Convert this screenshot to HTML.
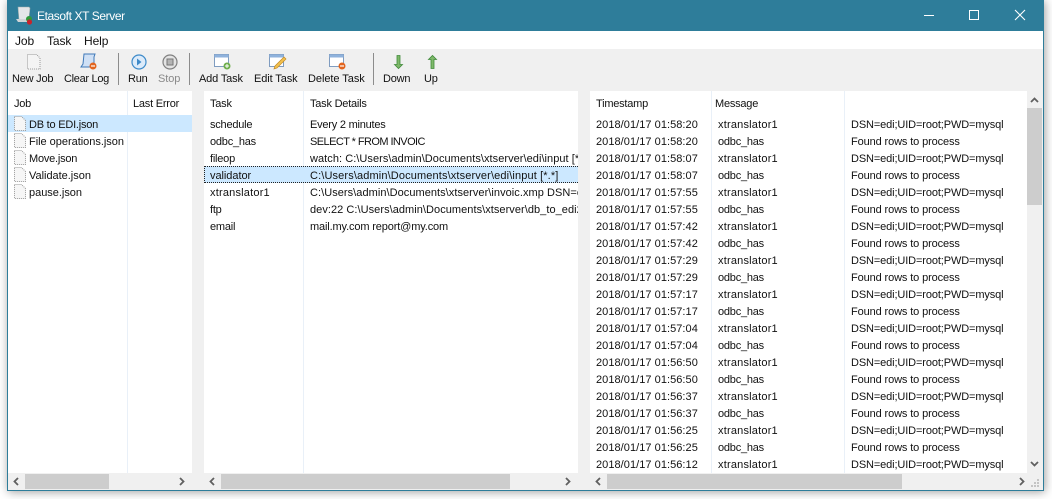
<!DOCTYPE html>
<html><head><meta charset="utf-8"><title>Etasoft XT Server</title>
<style>
html,body{margin:0;padding:0;width:1052px;height:499px;overflow:hidden;background:#fff}
*{box-sizing:border-box}
body{font-family:"Liberation Sans",sans-serif;font-size:11px;letter-spacing:-.22px;color:#111;position:relative}
#win{position:absolute;left:7px;top:0;width:1037px;height:491px;background:#f0f0f0;border:1px solid #2e7d9a;border-top:0;box-shadow:1px 1px 9px rgba(0,0,0,.38)}
#title{position:absolute;left:-1px;top:0;width:1037px;height:31px;background:#2e7d9a;color:#fff;font-size:12px;letter-spacing:-.4px}
#menu{position:absolute;left:0;top:31px;width:1035px;height:18px;background:#fff;font-size:12px;letter-spacing:-.1px}
.a{position:absolute;white-space:nowrap}
.p{position:absolute;background:#fff;overflow:hidden}
.r{position:absolute;left:0;width:100%;height:17px;line-height:17px}
.r span{position:absolute;white-space:nowrap;top:2px}
.h{position:absolute;top:5px;white-space:nowrap;line-height:16px}
.v{position:absolute;top:0;bottom:0;width:1px;background:#e9f0f8}
.tb{position:absolute;top:72px;line-height:14px;white-space:nowrap;text-align:center}
.sep{position:absolute;top:53px;width:1px;height:32px;background:#8c8c8c}
.thumb{position:absolute;background:#cdcdcd}
svg{position:absolute;overflow:visible}
.l span{letter-spacing:.13px}
.l span.w{letter-spacing:.05px}
.f span{letter-spacing:-.02px}
.t span:nth-child(1){letter-spacing:.05px}
.t span:nth-child(3){letter-spacing:-.12px}
.r span.x{letter-spacing:.2px}
.r span.s{letter-spacing:-.57px}
.r span.n{letter-spacing:-.22px}
</style></head><body>
<div id="win">
<div id="title">
<svg style="left:9px;top:6px" width="20" height="18" viewBox="0 0 20 18"><path d="M2 1h11l1 1-1 10-3 2H3z" fill="#e4e6e8" stroke="#9aa" stroke-width=".6"/><path d="M0 13h10l2 3H2z" fill="#cfd4d6"/><circle cx="13" cy="13" r="3" fill="#2f9a3a"/><circle cx="13.500" cy="16" r="2.600" fill="#c8232c"/></svg>
<div class="a" style="left:30px;top:8px;line-height:16px">Etasoft XT Server</div>
<svg style="left:917px;top:8px" width="100" height="16" viewBox="0 0 100 16"><path d="M0 7.500h10" stroke="#fff" stroke-width="1"/><rect x="45.500" y="2.500" width="9" height="9" fill="none" stroke="#fff"/><path d="M91 2l10 10M101 2L91 12" stroke="#fff" stroke-width="1.100"/></svg>
</div>
<div id="menu">
<div class="a" style="left:7px;top:3px;line-height:15px">Job</div>
<div class="a" style="left:39px;top:3px;line-height:15px">Task</div>
<div class="a" style="left:76px;top:3px;line-height:15px">Help</div>
</div>

<!-- toolbar -->
<svg style="left:19px;top:54px" width="14" height="16" viewBox="0 0 14 16"><path d="M.5.500h9l3.500 3.500v11H.5z" fill="#f4f4f4" stroke="#999" stroke-dasharray="1 1"/></svg>
<div class="tb" style="left:4px">New Job</div>
<svg style="left:72px;top:53px" width="18" height="18" viewBox="0 0 18 18"><path d="M4 1h11l-1 3v10H1l2-3z" fill="#cfe0f5" stroke="#3f78b8"/><circle cx="13" cy="13" r="3.500" fill="#e2651f"/><path d="M11 13h4" stroke="#fff" stroke-width="1.200"/></svg>
<div class="tb" style="left:56px;letter-spacing:-.3px">Clear Log</div>
<div class="sep" style="left:110px"></div>
<svg style="left:123px;top:54px" width="16" height="16" viewBox="0 0 16 16"><circle cx="8" cy="8" r="7" fill="#dcebfa" stroke="#3d8ac9" stroke-width="1.200"/><path d="M6 4.500l4.500 3.500L6 11.500z" fill="#3d8ac9"/></svg>
<div class="tb" style="left:120px">Run</div>
<svg style="left:154px;top:54px" width="16" height="16" viewBox="0 0 16 16"><circle cx="8" cy="8" r="7" fill="#e4e4e4" stroke="#808080" stroke-width="1.200"/><rect x="5" y="5" width="6" height="6" fill="#b4b4b4" stroke="#777"/></svg>
<div class="tb" style="left:150px;color:#8a8a8a;letter-spacing:-.1px">Stop</div>
<div class="sep" style="left:181px"></div>
<svg style="left:206px;top:54px" width="18" height="17" viewBox="0 0 18 17"><rect x=".5" y=".5" width="14" height="12" fill="#fff" stroke="#7f9cc0"/><rect x=".5" y=".5" width="14" height="3" fill="#8fb2dc"/><circle cx="13" cy="12" r="3.500" fill="#6fae4c"/><path d="M11 12h4M13 10v4" stroke="#fff"/></svg>
<div class="tb" style="left:191px;letter-spacing:-.15px">Add Task</div>
<svg style="left:261px;top:54px" width="18" height="17" viewBox="0 0 18 17"><rect x=".5" y=".5" width="14" height="12" fill="#fff" stroke="#7f9cc0"/><rect x=".5" y=".5" width="14" height="3" fill="#8fb2dc"/><path d="M15 3l2 2-9 9-3 1 1-3z" fill="#f2c14e" stroke="#c48a24" stroke-width=".7"/></svg>
<div class="tb" style="left:246px;letter-spacing:-.1px">Edit Task</div>
<svg style="left:321px;top:54px" width="18" height="17" viewBox="0 0 18 17"><rect x=".5" y=".5" width="14" height="12" fill="#fff" stroke="#7f9cc0"/><rect x=".5" y=".5" width="14" height="3" fill="#8fb2dc"/><circle cx="13" cy="12" r="3.500" fill="#e2651f"/><path d="M11 12h4" stroke="#fff" stroke-width="1.200"/></svg>
<div class="tb" style="left:300px;letter-spacing:-.05px">Delete Task</div>
<div class="sep" style="left:365px"></div>
<svg style="left:386px;top:55px" width="9" height="14" viewBox="0 0 9 14"><path d="M3 .500h3v9h2.500l-4 4-4-4H3z" fill="#7fb86a" stroke="#3f8a3a" stroke-width=".8"/></svg>
<div class="tb" style="left:375px">Down</div>
<svg style="left:420px;top:55px" width="9" height="14" viewBox="0 0 9 14"><path d="M3 13.500h3v-9h2.500l-4-4-4 4H3z" fill="#7fb86a" stroke="#3f8a3a" stroke-width=".8"/></svg>
<div class="tb" style="left:416px">Up</div>

<!-- panel 1 -->
<div class="p" style="left:0;top:91px;width:184px;height:382px">
<div class="v" style="left:119px"></div>
<div class="h" style="left:6px">Job</div><div class="h" style="left:125px">Last Error</div>
<div class="a" style="left:0;top:24px;width:184px;height:17px;background:#cce8ff"></div>
<div class="r" style="top:24px"><span style="left:21px">DB to EDI.json</span></div>
<div class="r f" style="top:41px"><span style="left:21px">File operations.json</span></div>
<div class="r" style="top:58px"><span style="left:21px">Move.json</span></div>
<div class="r f" style="top:75px"><span style="left:21px">Validate.json</span></div>
<div class="r f" style="top:92px"><span style="left:21px">pause.json</span></div>
<svg style="left:6px;top:24px" width="12" height="85" viewBox="0 0 12 85" fill="#f6f6f6" stroke="#999" stroke-dasharray="1 1"><path d="M.5 1.500h7l4 4v10H.5z"/><path d="M.5 18.500h7l4 4v10H.5z"/><path d="M.5 35.500h7l4 4v10H.5z"/><path d="M.5 52.500h7l4 4v10H.5z"/><path d="M.5 69.500h7l4 4v10H.5z"/></svg>
</div>
<div class="a" style="left:0;top:473px;width:184px;height:17px;background:#f0f0f0"><div class="thumb" style="left:17px;top:1px;width:84px;height:15px"></div>
<svg style="left:5px;top:4px" width="172" height="9" viewBox="0 0 172 9" fill="none" stroke="#606060" stroke-width="1.800"><path d="M5 1L1.500 4.500 5 8M167 1l3.500 3.500L167 8"/></svg></div>

<!-- panel 2 -->
<div class="p" style="left:196px;top:91px;width:374px;height:382px">
<div class="v" style="left:99px"></div>
<div class="h" style="left:6px">Task</div><div class="h" style="left:106px">Task Details</div>
<div class="a" style="left:0;top:75px;width:374px;height:17px;background:#cce8ff;border:1px dotted #222;border-right:0"></div>
<div class="r" style="top:24px"><span style="left:6px">schedule</span><span style="left:106px">Every 2 minutes</span></div>
<div class="r" style="top:41px"><span style="left:6px">odbc_has</span><span class="s" style="left:106px">SELECT * FROM INVOIC</span></div>
<div class="r l" style="top:58px"><span class="n" style="left:6px">fileop</span><span class="w" style="left:106px">watch: C:\Users\admin\Documents\xtserver\edi\input [*.*]</span></div>
<div class="r l" style="top:75px"><span style="left:6px;letter-spacing:-.05px">validator</span><span style="left:106px">C:\Users\admin\Documents\xtserver\edi\input [*.*]</span></div>
<div class="r l" style="top:92px"><span class="x" style="left:6px">xtranslator1</span><span class="w" style="left:106px">C:\Users\admin\Documents\xtserver\invoic.xmp DSN=edi;UID=root</span></div>
<div class="r l" style="top:109px"><span class="n" style="left:6px">ftp</span><span class="w" style="left:106px">dev:22 C:\Users\admin\Documents\xtserver\db_to_edi2.json</span></div>
<div class="r" style="top:126px"><span style="left:6px">email</span><span style="left:106px;letter-spacing:-.14px">mail.my.com report@my.com</span></div>
</div>
<div class="a" style="left:196px;top:473px;width:374px;height:17px;background:#f0f0f0"><div class="thumb" style="left:17px;top:1px;width:289px;height:15px"></div>
<svg style="left:5px;top:4px" width="362" height="9" viewBox="0 0 362 9" fill="none" stroke="#606060" stroke-width="1.800"><path d="M5 1L1.500 4.500 5 8M357 1l3.500 3.500L357 8"/></svg></div>

<!-- panel 3 -->
<div class="p" style="left:582px;top:91px;width:437px;height:382px">
<div class="v" style="left:121px"></div><div class="v" style="left:254px"></div>
<div class="h" style="left:6px">Timestamp</div><div class="h" style="left:125px">Message</div>
<div class="r t" style="top:24px"><span style="left:6px">2018/01/17 01:58:20</span><span class="x" style="left:128px">xtranslator1</span><span style="left:261px">DSN=edi;UID=root;PWD=mysql</span></div>
<div class="r t" style="top:41px"><span style="left:6px">2018/01/17 01:58:20</span><span style="left:128px">odbc_has</span><span style="left:261px">Found rows to process</span></div>
<div class="r t" style="top:58px"><span style="left:6px">2018/01/17 01:58:07</span><span class="x" style="left:128px">xtranslator1</span><span style="left:261px">DSN=edi;UID=root;PWD=mysql</span></div>
<div class="r t" style="top:75px"><span style="left:6px">2018/01/17 01:58:07</span><span style="left:128px">odbc_has</span><span style="left:261px">Found rows to process</span></div>
<div class="r t" style="top:92px"><span style="left:6px">2018/01/17 01:57:55</span><span class="x" style="left:128px">xtranslator1</span><span style="left:261px">DSN=edi;UID=root;PWD=mysql</span></div>
<div class="r t" style="top:109px"><span style="left:6px">2018/01/17 01:57:55</span><span style="left:128px">odbc_has</span><span style="left:261px">Found rows to process</span></div>
<div class="r t" style="top:126px"><span style="left:6px">2018/01/17 01:57:42</span><span class="x" style="left:128px">xtranslator1</span><span style="left:261px">DSN=edi;UID=root;PWD=mysql</span></div>
<div class="r t" style="top:143px"><span style="left:6px">2018/01/17 01:57:42</span><span style="left:128px">odbc_has</span><span style="left:261px">Found rows to process</span></div>
<div class="r t" style="top:160px"><span style="left:6px">2018/01/17 01:57:29</span><span class="x" style="left:128px">xtranslator1</span><span style="left:261px">DSN=edi;UID=root;PWD=mysql</span></div>
<div class="r t" style="top:177px"><span style="left:6px">2018/01/17 01:57:29</span><span style="left:128px">odbc_has</span><span style="left:261px">Found rows to process</span></div>
<div class="r t" style="top:194px"><span style="left:6px">2018/01/17 01:57:17</span><span class="x" style="left:128px">xtranslator1</span><span style="left:261px">DSN=edi;UID=root;PWD=mysql</span></div>
<div class="r t" style="top:211px"><span style="left:6px">2018/01/17 01:57:17</span><span style="left:128px">odbc_has</span><span style="left:261px">Found rows to process</span></div>
<div class="r t" style="top:228px"><span style="left:6px">2018/01/17 01:57:04</span><span class="x" style="left:128px">xtranslator1</span><span style="left:261px">DSN=edi;UID=root;PWD=mysql</span></div>
<div class="r t" style="top:245px"><span style="left:6px">2018/01/17 01:57:04</span><span style="left:128px">odbc_has</span><span style="left:261px">Found rows to process</span></div>
<div class="r t" style="top:262px"><span style="left:6px">2018/01/17 01:56:50</span><span class="x" style="left:128px">xtranslator1</span><span style="left:261px">DSN=edi;UID=root;PWD=mysql</span></div>
<div class="r t" style="top:279px"><span style="left:6px">2018/01/17 01:56:50</span><span style="left:128px">odbc_has</span><span style="left:261px">Found rows to process</span></div>
<div class="r t" style="top:296px"><span style="left:6px">2018/01/17 01:56:37</span><span class="x" style="left:128px">xtranslator1</span><span style="left:261px">DSN=edi;UID=root;PWD=mysql</span></div>
<div class="r t" style="top:313px"><span style="left:6px">2018/01/17 01:56:37</span><span style="left:128px">odbc_has</span><span style="left:261px">Found rows to process</span></div>
<div class="r t" style="top:330px"><span style="left:6px">2018/01/17 01:56:25</span><span class="x" style="left:128px">xtranslator1</span><span style="left:261px">DSN=edi;UID=root;PWD=mysql</span></div>
<div class="r t" style="top:347px"><span style="left:6px">2018/01/17 01:56:25</span><span style="left:128px">odbc_has</span><span style="left:261px">Found rows to process</span></div>
<div class="r t" style="top:364px"><span style="left:6px">2018/01/17 01:56:12</span><span class="x" style="left:128px">xtranslator1</span><span style="left:261px">DSN=edi;UID=root;PWD=mysql</span></div>
</div>
<div class="a" style="left:582px;top:473px;width:453px;height:17px;background:#f0f0f0"><div class="thumb" style="left:17px;top:1px;width:295px;height:15px"></div>
<svg style="left:5px;top:4px" width="430" height="9" viewBox="0 0 430 9" fill="none" stroke="#606060" stroke-width="1.800"><path d="M5 1L1.500 4.500 5 8M425 1l3.500 3.500L425 8"/></svg>
<svg style="left:440px;top:6px" width="10" height="10" viewBox="0 0 10 10" fill="#c4c4c4"><rect x="7" y="0" width="2" height="2"/><rect x="4" y="3" width="2" height="2"/><rect x="7" y="3" width="2" height="2"/><rect x="1" y="6" width="2" height="2"/><rect x="4" y="6" width="2" height="2"/><rect x="7" y="6" width="2" height="2"/></svg></div>
<div class="a" style="left:1019px;top:91px;width:16px;height:382px;background:#f0f0f0"><div class="thumb" style="left:0;top:17px;width:15px;height:97px"></div>
<svg style="left:3px;top:5px" width="10" height="372" viewBox="0 0 10 372" fill="none" stroke="#606060" stroke-width="1.800"><path d="M1 6l3.500-3.500L8 6M1 366l3.500 3.500L8 366"/></svg></div>
</div>
</body></html>
